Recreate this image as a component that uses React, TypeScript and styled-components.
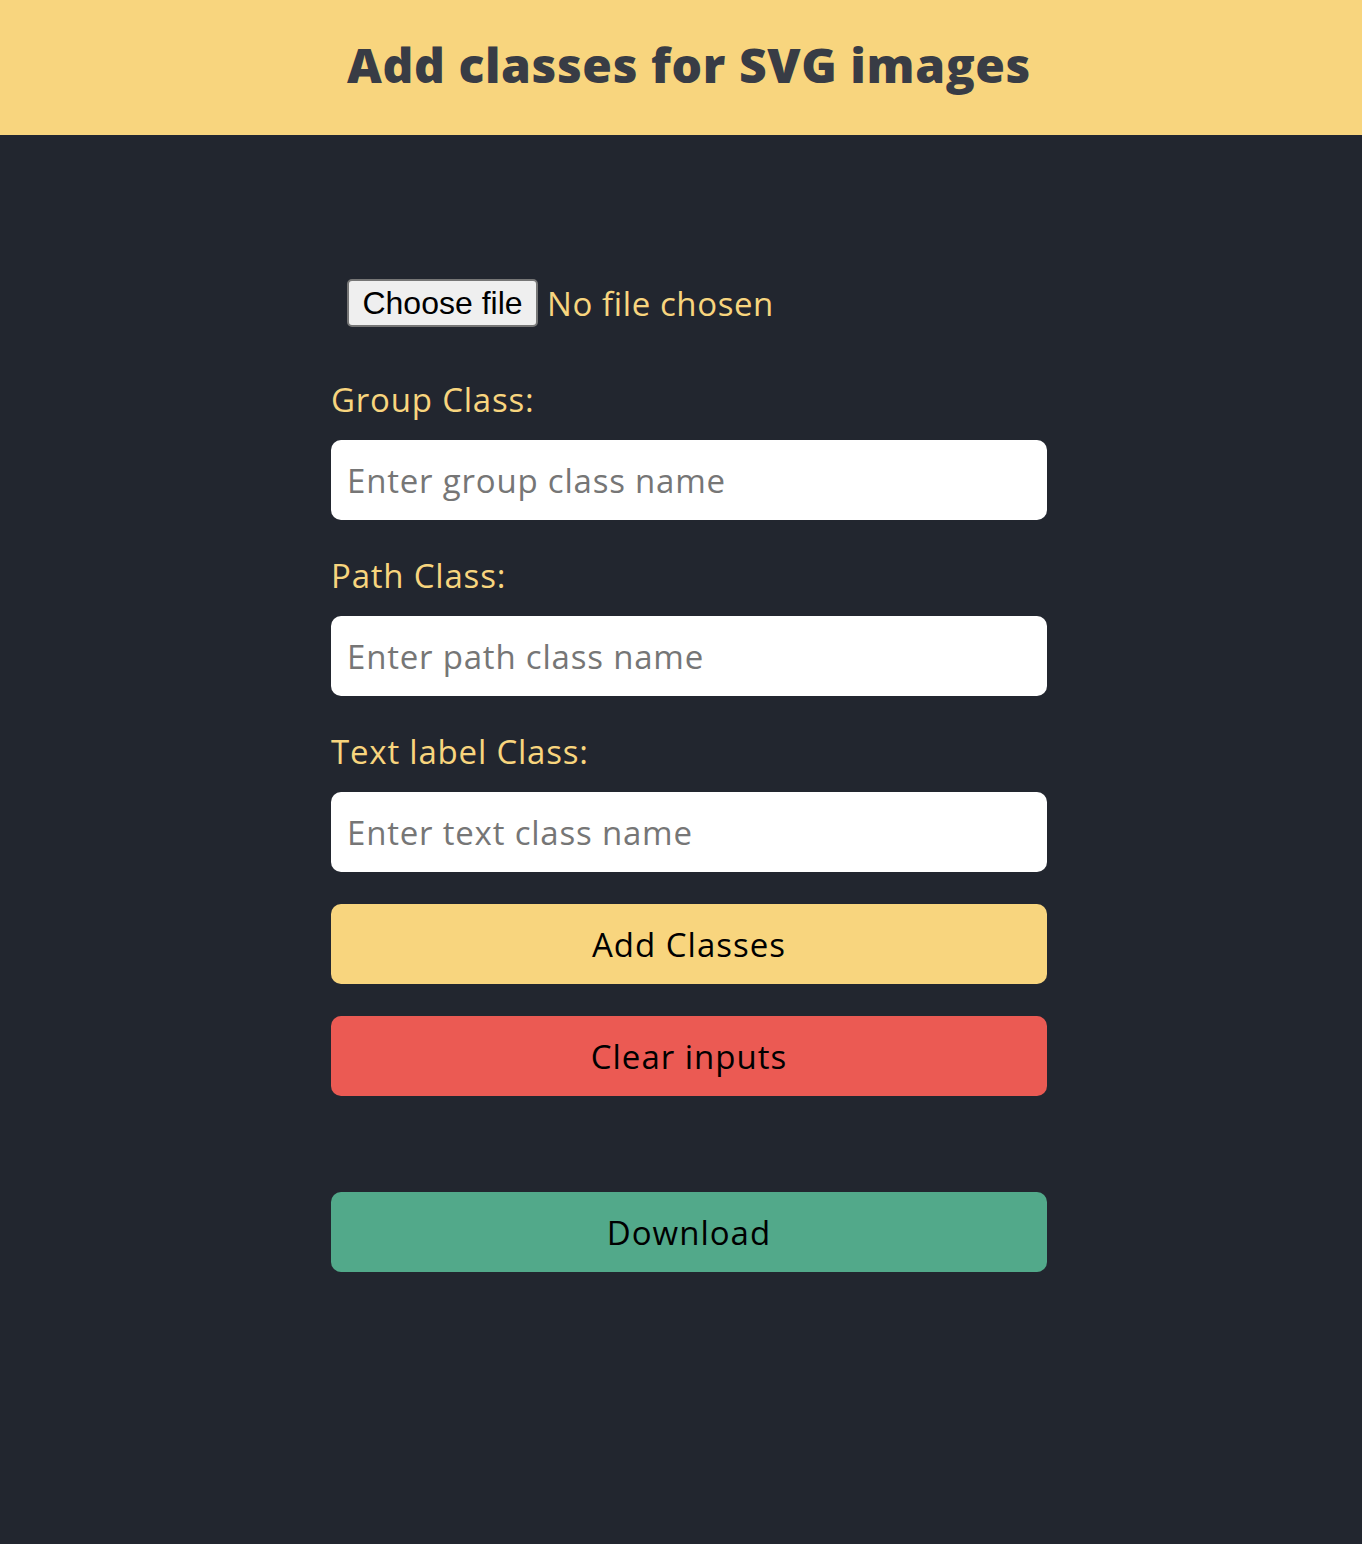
import React from "react";
import styled, { createGlobalStyle } from "styled-components";

const FONT = `"Open Sans", "Noto Sans", Arial, sans-serif`;

const GlobalStyle = createGlobalStyle`
  html, body {
    margin: 0;
    padding: 0;
    background: #22262f;
  }
  body {
    font-family: ${FONT};
    min-height: 1544px;
  }
  * { box-sizing: border-box; }
`;

const Header = styled.header`
  height: 135px;
  background: #f8d57e;
  display: flex;
  align-items: center;
  justify-content: center;
  padding-left: 16px;
  padding-bottom: 6px;
`;

const Title = styled.h1`
  margin: 0;
  font-family: ${FONT};
  font-weight: 800;
  font-size: 48px;
  color: #383c45;
  letter-spacing: 0.6px;
`;

const Main = styled.main`
  padding-left: 16px;
  padding-top: 144px;
  padding-bottom: 272px;
`;

const Form = styled.form`
  width: 716px;
  margin: 0 auto;
  display: flex;
  flex-direction: column;
`;

const FileRow = styled.label`
  display: flex;
  align-items: center;
  gap: 9px;
  height: 48px;
  padding-left: 16px;
  margin-bottom: 49px;
  cursor: pointer;
`;

const HiddenInput = styled.input`
  display: none;
`;

const FileButton = styled.span`
  display: inline-flex;
  align-items: center;
  justify-content: center;
  height: 48px;
  width: 191px;
  background: #efefef;
  border: 2px solid #767676;
  border-radius: 5px;
  font-family: "Liberation Sans", Arial, sans-serif;
  font-size: 32px;
  color: #000;
`;

const FileStatus = styled.span`
  font-size: 33px;
  letter-spacing: 0.6px;
  color: #f8d57e;
`;

const Field = styled.div`
  display: flex;
  flex-direction: column;
  margin-bottom: 32px;
`;

const Label = styled.label`
  font-size: 33px;
  letter-spacing: 0.8px;
  line-height: 48px;
  color: #f8d57e;
  margin-bottom: 16px;
`;

const TextInput = styled.input`
  height: 80px;
  width: 100%;
  border: none;
  border-radius: 10px;
  background: #fff;
  padding: 0 16px;
  font-family: ${FONT};
  font-size: 33px;
  letter-spacing: 0.8px;
  color: #222;
  outline: none;
  &::placeholder {
    color: #767676;
  }
`;

const ActionButton = styled.button<{ $bg: string; $gap: number }>`
  height: 80px;
  width: 100%;
  border: none;
  border-radius: 10px;
  background: ${(p) => p.$bg};
  color: #000;
  font-family: ${FONT};
  font-size: 33px;
  letter-spacing: 1px;
  cursor: pointer;
  margin-bottom: ${(p) => p.$gap}px;
`;

export default function App() {
  return (
    <>
      <GlobalStyle />
      <Header>
        <Title>Add classes for SVG images</Title>
      </Header>
      <Main>
        <Form onSubmit={(e) => e.preventDefault()}>
          <FileRow>
            <HiddenInput type="file" accept=".svg" />
            <FileButton>Choose file</FileButton>
            <FileStatus>No file chosen</FileStatus>
          </FileRow>
          <Field>
            <Label htmlFor="group">Group Class:</Label>
            <TextInput id="group" placeholder="Enter group class name" />
          </Field>
          <Field>
            <Label htmlFor="path">Path Class:</Label>
            <TextInput id="path" placeholder="Enter path class name" />
          </Field>
          <Field>
            <Label htmlFor="text">Text label Class:</Label>
            <TextInput id="text" placeholder="Enter text class name" />
          </Field>
          <ActionButton type="button" $bg="#f8d57e" $gap={32}>
            Add Classes
          </ActionButton>
          <ActionButton type="button" $bg="#eb5a53" $gap={96}>
            Clear inputs
          </ActionButton>
          <ActionButton type="button" $bg="#52a98a" $gap={0}>
            Download
          </ActionButton>
        </Form>
      </Main>
    </>
  );
}
